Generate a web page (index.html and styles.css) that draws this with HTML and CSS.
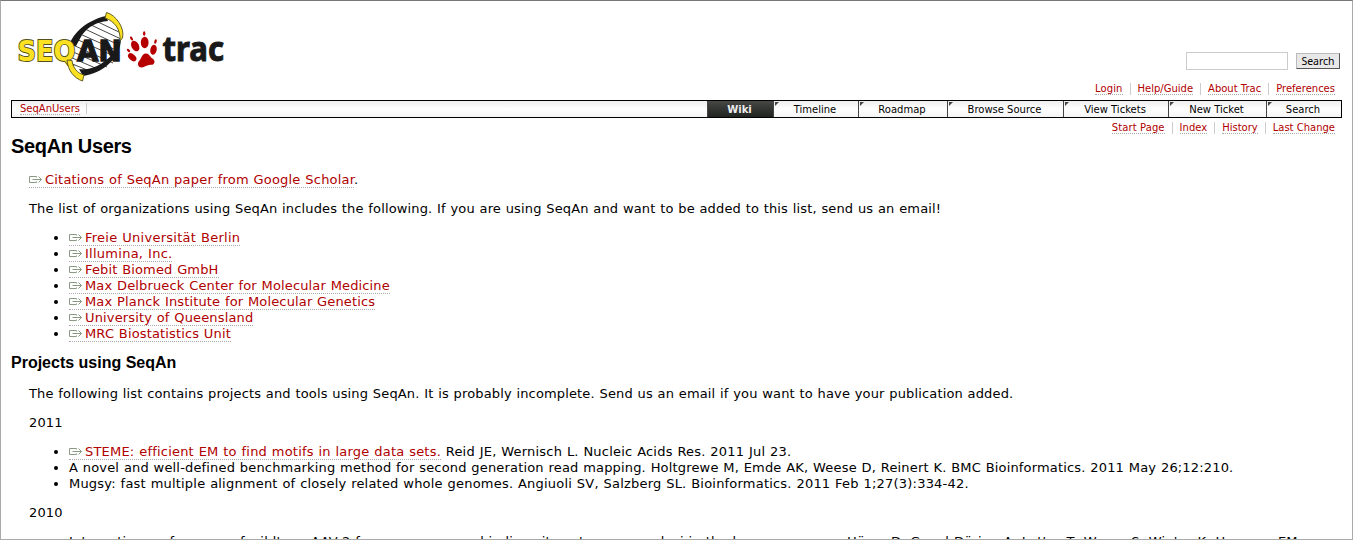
FILE: index.html
```html
<!DOCTYPE html>
<html lang="en">
<head>
<meta charset="utf-8">
<title>SeqAnUsers – SeqAn</title>
<link rel="stylesheet" href="styles.css">
</head>
<body>
<svg class="defs" width="0" height="0"><symbol id="ext" viewBox="0 0 13 9"><path d="M7.500 2.500V1.500H.5v6h7V6.500M3.500 4.500h9M9.500 1.500l3 3-3 3" fill="none" stroke="#8a9a84" stroke-width="1"/></symbol></svg>
<div class="page">
  <header class="banner">
    <svg class="logo" width="216" height="76" viewBox="14 8 216 76">
      <path d="M70 45C77 28 92 19 106 17L121 38L118 58C108 68 96 73 83 75L69 61Z" fill="#fff"/>
      <path d="M98 22l23 11M91 25l30 14M85 29l34 16M80 34l36 16M76 39l38 17M73 45l40 18M71 51l36 16M70 57l30 13M70 63l22 9" stroke="#333" stroke-width=".9" fill="none"/>
      <path d="M69 46C73 32 88 20 106 16L108 21C96 22 88 27 82 35L76 46ZM121 38C121 57 104 73 83 76L79 69C93 71 108 62 116 49Z" fill="#191919"/>
      <path d="M106.500 12.500C116 15 125 28 122.500 38L120 41C121 29 114 21 105 18Z" fill="#fbe122" stroke="#55501c" stroke-width=".9"/>
      <text x="17.500" y="61" class="seq" textLength="58" lengthAdjust="spacingAndGlyphs">SEQ</text>
      <text x="77" y="61" class="an" textLength="44.500" lengthAdjust="spacingAndGlyphs">AN</text>
      <path d="M67 60C68 71 74 78 82.500 81L84 75C77 73 73 68 72 60.500Z" fill="#fbe122" stroke="#55501c" stroke-width=".9"/>
      <g fill="#b60000">
        <ellipse cx="144.700" cy="42.500" rx="3.900" ry="5.800"/><ellipse cx="135.200" cy="46" rx="3.700" ry="5.600" transform="rotate(-28 135.200 46)"/>
        <ellipse cx="153.500" cy="49.800" rx="3.200" ry="5" transform="rotate(12 153.500 49.800)"/><ellipse cx="132.200" cy="57.200" rx="3" ry="4.900" transform="rotate(-48 132.200 57.200)"/>
        <path d="M145.500 53.500C149 53 150 57 152.500 58.500C156 61 154.500 65 151 64.800C147 64.500 145 67.500 141.500 67.500C137.500 67.300 137 63 139.500 60.500C141.500 58 142 54 145.500 53.500Z"/>
        <ellipse cx="144.200" cy="33.500" rx="1.200" ry="2.200"/><ellipse cx="131.500" cy="38.500" rx="1.200" ry="2.200" transform="rotate(-30 131.500 38.500)"/><ellipse cx="155.500" cy="41.500" rx="1.200" ry="2.200" transform="rotate(15 155.500 41.500)"/><ellipse cx="128.500" cy="50.500" rx="1.200" ry="2" transform="rotate(-45 128.500 50.500)"/>
      </g>
      <text x="162.500" y="61" class="trac" textLength="61.500" lengthAdjust="spacingAndGlyphs">trac</text>
    </svg>
    <div class="tools">
      <form class="search"><input type="text" aria-label="Search"><button type="button">Search</button></form>
      <ul class="links meta"><li><a>Login</a></li><li><a>Help/Guide</a></li><li><a>About Trac</a></li><li><a>Preferences</a></li></ul>
    </div>
  </header>
  <nav class="mainnav">
    <div class="path"><a>SeqAnUsers</a></div>
    <ul class="tabs"><li class="active t1">Wiki</li><li class="t2">Timeline</li><li class="t3">Roadmap</li><li class="t4">Browse Source</li><li class="t5">View Tickets</li><li class="t6">New Ticket</li><li class="t7">Search</li></ul>
  </nav>
  <ul class="links ctx"><li><a>Start Page</a></li><li><a>Index</a></li><li><a>History</a></li><li><a>Last Change</a></li></ul>
  <main class="wiki">
    <h1>SeqAn Users</h1>
    <p class="lead"><a class="x"><svg><use href="#ext"/></svg>Citations of SeqAn paper from Google Scholar</a>.</p>
    <p>The list of organizations using SeqAn includes the following. If you are using SeqAn and want to be added to this list, send us an email!</p>
    <ul>
      <li class="wide"><a class="x"><svg><use href="#ext"/></svg>Freie Universität Berlin</a></li>
      <li class="wide"><a class="x"><svg><use href="#ext"/></svg>Illumina, Inc.</a></li>
      <li><a class="x"><svg><use href="#ext"/></svg>Febit Biomed GmbH</a></li>
      <li><a class="x"><svg><use href="#ext"/></svg>Max Delbrueck Center for Molecular Medicine</a></li>
      <li><a class="x"><svg><use href="#ext"/></svg>Max Planck Institute for Molecular Genetics</a></li>
      <li><a class="x"><svg><use href="#ext"/></svg>University of Queensland</a></li>
      <li><a class="x"><svg><use href="#ext"/></svg>MRC Biostatistics Unit</a></li>
    </ul>
    <h2>Projects using SeqAn</h2>
    <p>The following list contains projects and tools using SeqAn. It is probably incomplete. Send us an email if you want to have your publication added.</p>
    <p>2011</p>
    <ul class="pubs">
      <li class="loose"><a class="x"><svg><use href="#ext"/></svg>STEME: efficient EM to find motifs in large data sets.</a> Reid JE, Wernisch L. Nucleic Acids Res. 2011 Jul 23.</li>
      <li>A novel and well-defined benchmarking method for second generation read mapping. Holtgrewe M, Emde AK, Weese D, Reinert K. BMC Bioinformatics. 2011 May 26;12:210.</li>
      <li class="loose">Mugsy: fast multiple alignment of closely related whole genomes. Angiuoli SV, Salzberg SL. Bioinformatics. 2011 Feb 1;27(3):334-42.</li>
    </ul>
    <p>2010</p>
    <ul class="pubs">
      <li class="loose">Integration preferences of wildtype AAV-2 for consensus rep-binding sites at numerous loci in the human genome. Hüser D, Gogol-Döring A, Lutter T, Weger S, Winter K, Hammer EM,</li>
    </ul>
  </main>
</div>
</body>
</html>
```
FILE: styles.css
```css
* { box-sizing: border-box; }
body { margin: 0; background: #fff; color: #000; font: 13px/16px "DejaVu Sans", Verdana, sans-serif; overflow: hidden; }
ul { list-style: none; margin: 0; padding: 0; }
.defs { display: none; }
.page { height: 540px; overflow: hidden; border: 1px solid #aaa; border-top-color: #777; padding: 7px 10px 0; }
a { color: #b00000; border-bottom: 1px dotted #aaa; }
.banner { display: flex; justify-content: space-between; height: 92px; }
.logo { margin-left: 3px; flex: none; overflow: visible; }
.seq, .an { font: bold 29px/1 "DejaVu Sans", sans-serif; }
.seq { fill: #fbe122; stroke: #55501c; stroke-width: 1.9; paint-order: stroke; }
.an { fill: #191919; stroke: #191919; stroke-width: 1.4; }
.trac { fill: #191919; stroke: #191919; stroke-width: 1; font: bold 34px/1 "Noto Sans", "Open Sans", sans-serif; }
.tools { display: flex; flex-direction: column; align-items: flex-end; padding-top: 44px; }
.search { display: flex; gap: 8px; padding-right: 2px; height: 28px; }
.search input { width: 102px; height: 18px; border: 1px solid #ccc; padding: 0; background: #fff; }
.search button { width: 44px; height: 16px; margin-top: 1px; padding: 0; border: 1px solid #555; border-top-color: #bbb; border-left-color: #bbb; background: #e8e8e8; font: 10.5px/12px "Noto Sans", sans-serif; display: flex; align-items: center; justify-content: center; padding-bottom: 1px; }
.links { display: flex; justify-content: flex-end; font-size: 10px; line-height: 12px; }
.links li { padding: 0 7px; border-right: 1px solid #ccc; height: 12px; white-space: nowrap; }
.links li:last-child { border: 0; padding-right: 7px; }
.links li:first-child { letter-spacing: .1px; }
.meta { padding-top: 3px; }
.mainnav { display: flex; justify-content: space-between; height: 18px; border: 1px solid #000; background: linear-gradient(#eee, #fff 50%, #f4f4f4); font-size: 10px; line-height: 17px; width: 1331px; }
.path { padding-left: 8px; width: 75px; border-right: 1px solid #ccc; height: 11px; margin-top: 2px; line-height: 11px; white-space: nowrap; }
.tabs { display: flex; }
.tabs li { position: relative; text-align: center; padding-right: 2px; border-left: 1px solid #444; height: 16px; }
.tabs li:not(.active)::before { content: ""; position: absolute; left: 1px; top: 1px; border-top: 4px solid #444; border-right: 4px solid transparent; }
.tabs .active { color: #eee; font-weight: bold; background: linear-gradient(#484846, #333533 50%, #222422); }
.t1 { width: 66px; } .t2 { width: 85px; } .t3 { width: 89px; } .t4 { width: 116px; } .t5 { width: 105px; } .t6 { width: 98px; } .t7 { width: 75px; }
.ctx { padding-top: 4px; height: 17px; }
h1, h2 { font-family: "Liberation Sans", Arial, sans-serif; font-weight: bold; margin: 0; }
h1 { font-size: 20px; letter-spacing: -.35px; line-height: 22px; height: 37px; }
h2 { font-size: 16px; line-height: 20px; height: 33px; }
.wiki p { margin: 0 18px 13px; white-space: nowrap; }
.wiki p, .wiki li { letter-spacing: .145px; word-spacing: .44px; }
.wiki ul { margin: 0 0 11px 58px; list-style: disc; white-space: nowrap; }
.wiki .pubs { margin-bottom: 13px; }
.wiki .pubs li { letter-spacing: .17px; }
.wiki .lead { letter-spacing: .2px; }
.wiki .wide { letter-spacing: .26px; }
.wiki .pubs .loose { letter-spacing: .205px; }
.x svg { width: 13px; height: 9px; margin-right: 3px; }
```
